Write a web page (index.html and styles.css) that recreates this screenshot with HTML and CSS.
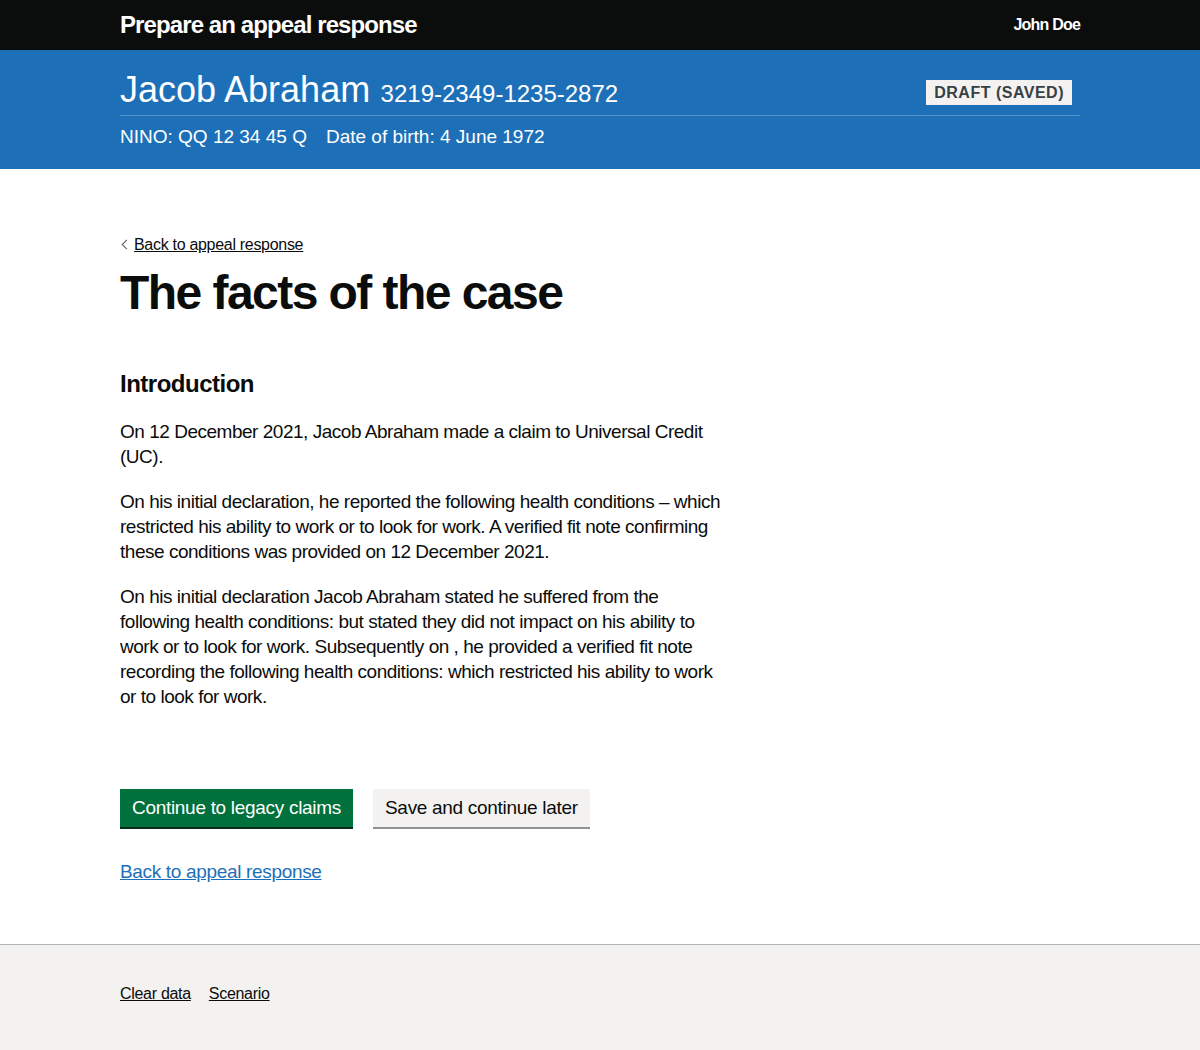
FILE: index.html
```html
<!DOCTYPE html>
<html lang="en">
<head>
<meta charset="utf-8">
<title>The facts of the case</title>
<link rel="stylesheet" href="styles.css">
</head>
<body>
<header class="topbar">
  <div class="container topbar-inner">
    <span class="service-name">Prepare an appeal response</span>
    <span class="user-name">John Doe</span>
  </div>
</header>
<section class="banner">
  <div class="container">
    <div class="banner-top">
      <div class="banner-title">
        <span class="person-name">Jacob Abraham</span>
        <span class="claim-ref">3219-2349-1235-2872</span>
      </div>
      <strong class="tag">Draft (saved)</strong>
    </div>
    <div class="banner-meta">
      <span>NINO: QQ 12 34 45 Q</span>
      <span>Date of birth: 4 June 1972</span>
    </div>
  </div>
</section>
<main class="container main">
  <a class="back-link" href="#">Back to appeal response</a>
  <h1 class="heading-xl">The facts of the case</h1>
  <div class="two-thirds">
    <h2 class="heading-m">Introduction</h2>
    <p class="body">On 12 December 2021, Jacob Abraham made a claim to Universal Credit (UC).</p>
    <p class="body">On his initial declaration, he reported the following health conditions – which restricted his ability to work or to look for work. A verified fit note confirming these conditions was provided on 12 December 2021.</p>
    <p class="body">On his initial declaration Jacob Abraham stated he suffered from the following health conditions: but stated they did not impact on his ability to work or to look for work. Subsequently on , he provided a verified fit note recording the following health conditions: which restricted his ability to work or to look for work.</p>
  </div>
  <div class="button-group">
    <button class="button button-primary">Continue to legacy claims</button>
    <button class="button button-secondary">Save and continue later</button>
  </div>
  <p class="body"><a class="link" href="#">Back to appeal response</a></p>
</main>
<footer class="footer">
  <div class="container footer-links">
    <a href="#">Clear data</a>
    <a href="#">Scenario</a>
  </div>
</footer>
</body>
</html>
```
FILE: styles.css
```css
* { box-sizing: border-box; }
html, body { margin: 0; padding: 0; }
body {
  font-family: "Liberation Sans", Arial, sans-serif;
  color: #0b0c0c;
  background: #fff;
  -webkit-font-smoothing: antialiased;
}
.container {
  width: 960px;
  margin: 0 auto;
}
.topbar {
  background: #0b0c0c;
  color: #fff;
  height: 50px;
}
.topbar-inner {
  display: flex;
  justify-content: space-between;
  align-items: center;
  height: 50px;
}
.service-name {
  font-weight: 700;
  font-size: 24px;
  letter-spacing: -0.9px;
}
.user-name {
  font-weight: 700;
  font-size: 16px;
  letter-spacing: -0.8px;
}
.banner {
  background: #1d70b8;
  color: #fff;
  height: 119px;
  padding-top: 20px;
}
.banner-top {
  display: flex;
  justify-content: space-between;
  align-items: flex-start;
  border-bottom: 1px solid #5694ca;
  padding-bottom: 5px;
}
.person-name {
  font-size: 36px;
  line-height: 40px;
}
.claim-ref {
  font-size: 24px;
  margin-left: 6px;
}
.tag {
  margin-top: 10px;
  margin-right: 8px;
  background: #f3f2f1;
  color: #383f43;
  font-size: 16px;
  font-weight: 700;
  text-transform: uppercase;
  letter-spacing: 0.5px;
  padding: 3px 8px 3px 8px;
  line-height: 19px;
}
.banner-meta {
  display: flex;
  gap: 19px;
  font-size: 19px;
  padding-top: 10px;
}
.main {
  padding-top: 66px;
  padding-bottom: 40px;
}
.back-link {
  display: inline-block;
  position: relative;
  padding-left: 14px;
  font-size: 16px;
  color: #0b0c0c;
  text-decoration: underline;
  letter-spacing: -0.3px;
  line-height: 1.25;
}
.back-link::before {
  content: "";
  position: absolute;
  left: 3px;
  top: 6px;
  width: 6px;
  height: 6px;
  border-left: 1px solid #505a5f;
  border-bottom: 1px solid #505a5f;
  transform: rotate(45deg);
}
.heading-xl {
  font-size: 48px;
  font-weight: 700;
  line-height: 50px;
  letter-spacing: -1.55px;
  margin: 13px 0 51px;
}
.two-thirds {
  width: 612px;
}
.heading-m {
  font-size: 24px;
  font-weight: 700;
  letter-spacing: -0.5px;
  margin: 0 0 20px;
  line-height: 30px;
}
.body {
  font-size: 19px;
  line-height: 25px;
  letter-spacing: -0.48px;
  margin: 0 0 20px;
}
.button-group {
  display: flex;
  gap: 20px;
  margin-top: 80px;
  margin-bottom: 32px;
}
.button {
  font-family: inherit;
  font-size: 19px;
  letter-spacing: -0.3px;
  line-height: 19px;
  border: 0;
  padding: 9px 12px 10px;
  border-radius: 0;
}
.button-primary {
  background: #00703c;
  color: #fff;
  box-shadow: 0 2px 0 #002d18;
}
.button-secondary {
  background: #f3f2f1;
  color: #0b0c0c;
  box-shadow: 0 2px 0 #929191;
}
.link {
  color: #1d70b8;
  text-decoration: underline;
  letter-spacing: -0.33px;
}
.footer {
  background: #f3f2f1;
  border-top: 1px solid #b1b4b6;
  height: 106px;
  padding-top: 40px;
}
.footer-links {
  display: flex;
  gap: 18px;
}
.footer-links a {
  color: #0b0c0c;
  font-size: 16px;
  letter-spacing: -0.3px;
  text-decoration: underline;
}
```
